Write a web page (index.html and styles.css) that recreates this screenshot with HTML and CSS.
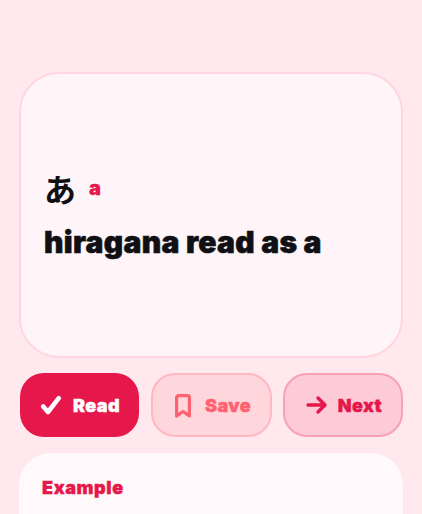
FILE: index.html
```html
<!DOCTYPE html>
<html lang="en">

<head>
    <meta charset="UTF-8">
    <meta name="viewport" content="width=device-width, initial-scale=1.0">
    <title>Hiragana</title>
    <link rel="stylesheet" href="styles.css">
</head>

<body>
    <!-- Flash card -->
    <div class="card">
        <div class="kana-row">
            <span class="kana">あ</span>
            <span class="romaji">a</span>
        </div>
        <h1 class="meaning">hiragana read as a</h1>
    </div>

    <!-- Actions -->
    <div class="actions">
        <button class="btn btn-read">
            <svg class="icon" viewBox="0 0 24 24" width="24" height="24">
                <path d="M4.2 13.5L9 19L19.8 5.2" fill="none" stroke="currentColor" stroke-width="4.6" stroke-linecap="round" stroke-linejoin="round" />
            </svg>
            Read
        </button>
        <button class="btn btn-save">
            <svg class="icon" viewBox="0 0 24 24" width="24" height="24">
                <path d="M5.6 4.6a2 2 0 0 1 2-2h8.8a2 2 0 0 1 2 2V23L12 18.5L5.6 23z" fill="none" stroke="currentColor" stroke-width="3.2" stroke-linejoin="round" />
            </svg>
            Save
        </button>
        <button class="btn btn-next">
            <svg class="icon" viewBox="0 0 24 24" width="24" height="24">
                <path d="M4 12h17M14 5l7 7-7 7" fill="none" stroke="currentColor" stroke-width="3.4" stroke-linecap="round" stroke-linejoin="round" />
            </svg>
            Next
        </button>
    </div>

    <!-- Example -->
    <div class="example">
        <h2>Example</h2>
    </div>
</body>

</html>
```

FILE: styles.css
```css
/* Global Styles */
html,
body {
    height: 100%;
}

body {
    margin: 0;
    padding: 72px 19px 0;
    box-sizing: border-box;
    overflow: hidden;
    display: flex;
    flex-direction: column;
    font-family: 'Inter', 'Noto Sans CJK JP', sans-serif;
    background-color: #ffe9ef;
    color: #0f0f14;
}

/* Flash card */
.card {
    flex-shrink: 0;
    height: 286px;
    box-sizing: border-box;
    padding: 0 23px 2px;
    display: flex;
    flex-direction: column;
    justify-content: center;
    background-color: #fff5f9;
    border: 2px solid #ffd6e0;
    border-radius: 40px;
}

.kana-row {
    display: flex;
    align-items: center;
    gap: 13px;
    margin-bottom: 16px;
}

.kana {
    font-family: 'Noto Sans CJK JP', sans-serif;
    font-size: 32px;
    font-weight: 700;
    line-height: 40px;
}

.romaji {
    color: #e6174a;
    font-size: 20px;
    font-weight: 900;
    -webkit-text-stroke: 0.3px #e6174a;
}

.meaning {
    margin: 0;
    font-size: 30px;
    font-weight: 900;
    line-height: 36px;
    letter-spacing: 0.3px;
    -webkit-text-stroke: 0.6px #0f0f14;
}

/* Action buttons */
.actions {
    flex-shrink: 0;
    display: grid;
    grid-template-columns: 119px 121px 120px;
    gap: 11.5px;
    margin: 15px 0 16px 1px;
}

.btn {
    height: 64px;
    display: flex;
    align-items: center;
    justify-content: center;
    gap: 10px;
    padding: 0;
    font-family: inherit;
    font-size: 18px;
    font-weight: 900;
    letter-spacing: 0.4px;
    -webkit-text-stroke: 0.4px currentColor;
    border-radius: 24px;
    border: 2px solid transparent;
    box-sizing: border-box;
}

.icon {
    overflow: visible;
}

.btn-read {
    background-color: #e6174a;
    color: white;
}

.btn-save {
    background-color: #ffd6dc;
    border-color: #ffb8c2;
    color: #ff6170;
}

.btn-next {
    background-color: #fdcbd8;
    border-color: #f7a1b5;
    color: #e6174a;
}

/* Example */
.example {
    flex: 1;
    box-sizing: border-box;
    padding: 23px 23px 0;
    background-color: #fff9fb;
    border-radius: 32px 32px 0 0;
}

.example h2 {
    margin: 0;
    color: #e6174a;
    font-size: 18px;
    font-weight: 900;
    line-height: 24px;
    letter-spacing: 0.6px;
    -webkit-text-stroke: 0.4px #e6174a;
}
```
